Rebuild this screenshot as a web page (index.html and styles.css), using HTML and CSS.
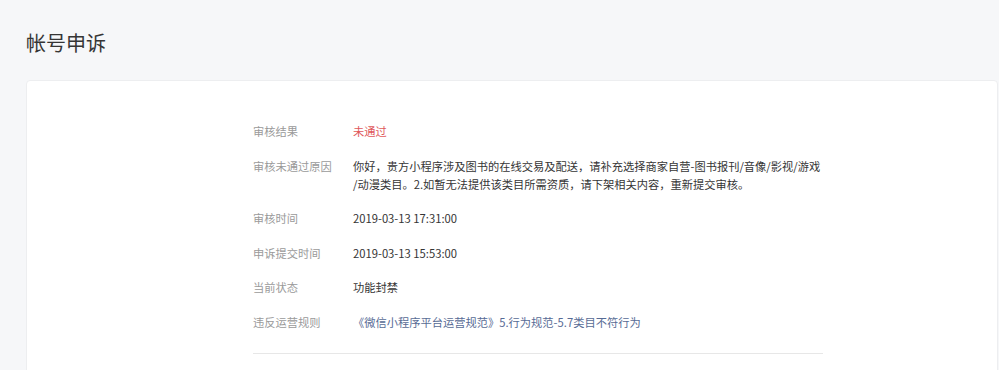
FILE: index.html
```html
<!DOCTYPE html>
<html lang="zh-CN">
<head>
<meta charset="utf-8">
<title>帐号申诉</title>
<link rel="stylesheet" href="styles.css">
</head>
<body>
<div class="page">
  <h1 class="page-title">帐号申诉</h1>
  <div class="card">
    <div class="info">
      <div class="row">
        <div class="label">审核结果</div>
        <div class="value value-fail">未通过</div>
      </div>
      <div class="row">
        <div class="label">审核未通过原因</div>
        <div class="value">你好，贵方小程序涉及图书的在线交易及配送，请补充选择商家自营-图书报刊/音像/影视/游戏<br>/动漫类目。2.如暂无法提供该类目所需资质，请下架相关内容，重新提交审核。</div>
      </div>
      <div class="row">
        <div class="label">审核时间</div>
        <div class="value">2019-03-13 17:31:00</div>
      </div>
      <div class="row">
        <div class="label">申诉提交时间</div>
        <div class="value">2019-03-13 15:53:00</div>
      </div>
      <div class="row">
        <div class="label">当前状态</div>
        <div class="value">功能封禁</div>
      </div>
      <div class="row">
        <div class="label">违反运营规则</div>
        <div class="value"><a class="link" href="#">《微信小程序平台运营规范》5.行为规范-5.7类目不符行为</a></div>
      </div>
      <div class="divider"></div>
    </div>
  </div>
</div>
</body>
</html>
```

FILE: styles.css
```css
* { box-sizing: border-box; }
html, body {
  margin: 0;
  padding: 0;
  background: #f6f7f9;
  height: 100%;
}
body {
  font-family: "Noto Sans CJK SC", "Noto Sans", sans-serif;
  color: #353535;
  overflow: hidden;
}
.page {
  display: flex;
  flex-direction: column;
}
.page-title {
  margin: 0;
  padding: 29px 0 23px 26px;
  font-size: 20px;
  line-height: 28px;
  font-weight: normal;
  color: #353535;
}
.card {
  margin: 0 1px 0 26px;
  background: #fff;
  border: 1px solid #edeef0;
  border-radius: 4px;
  padding: 41px 0 40px 226px;
  min-height: 320px;
}
.info {
  width: 570px;
  display: flex;
  flex-direction: column;
  gap: 16.5px;
}
.row {
  display: flex;
  font-size: 11.25px;
  line-height: 18px;
}
.label {
  width: 100px;
  flex: none;
  color: #9a9a9a;
}
.value {
  flex: 1;
  color: #353535;
}
.value-fail { color: #e0585b; }
.link {
  color: #576b95;
  text-decoration: none;
}
.divider {
  margin-top: 6px;
  height: 1px;
  background: #e7e7e7;
}
```
